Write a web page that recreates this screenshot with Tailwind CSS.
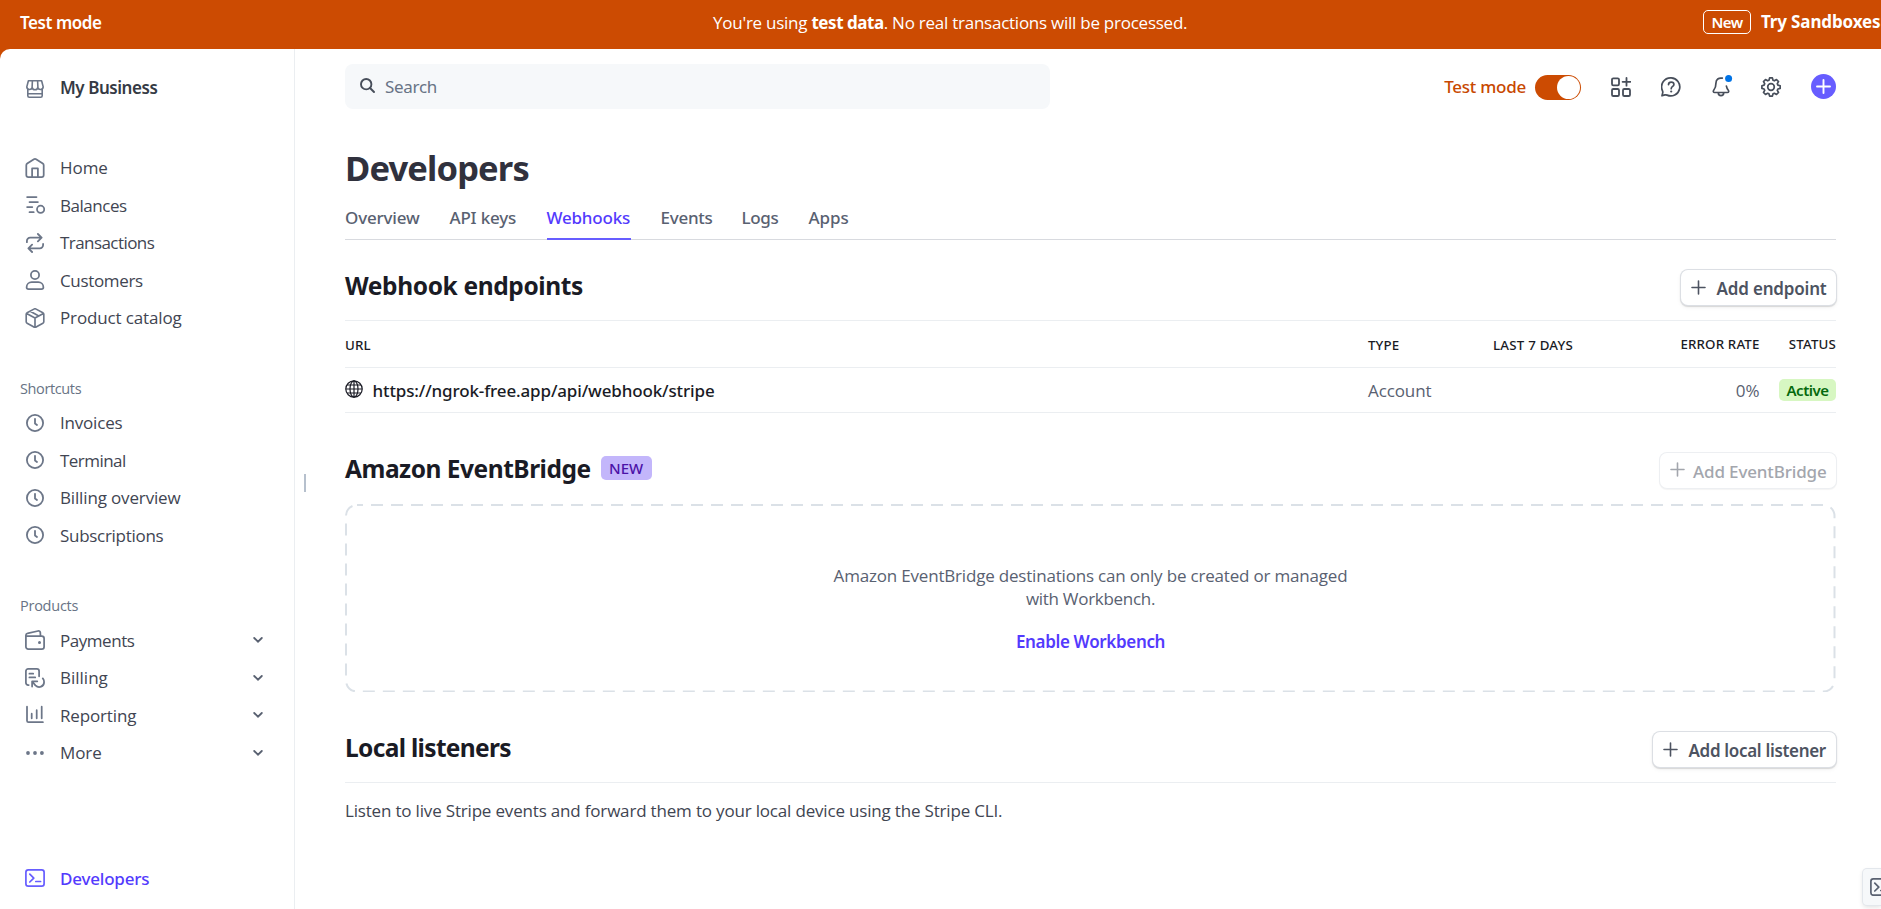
<!DOCTYPE html>
<html lang="en">
<head>
<meta charset="utf-8">
<title>Developers – Webhooks</title>
<script src="https://cdn.jsdelivr.net/npm/@tailwindcss/browser@4"></script>
</head>
<body class="h-[909px] w-[1881px] overflow-hidden bg-[#cc4b02] font-['Open_Sans','Noto_Sans',sans-serif] text-[17px] leading-[22px] text-[#414552] whitespace-nowrap">

<!-- Test mode banner -->
<div class="flex h-[49px] items-start text-white">
  <div class="w-[713px] shrink-0 pt-[12px] pl-5 font-['Noto_Sans'] font-semibold tracking-[-0.45px]">Test mode</div>
  <div class="w-[990px] shrink-0 pt-[12px] tracking-[-0.25px]">You're using <b class="font-['Noto_Sans'] font-bold tracking-[-0.45px]">test data</b>. No real transactions will be processed.</div>
  <div class="mt-[10px] flex h-6 w-12 shrink-0 items-center justify-center rounded-[5px] border border-white font-['Noto_Sans'] text-[15px] font-semibold tracking-[-0.6px]">New</div>
  <div class="ml-[10px] shrink-0 pt-[11px] font-['Noto_Sans'] font-bold tracking-[-0.14px]">Try Sandboxes</div>
</div>

<div class="flex h-[860px] rounded-tl-[10px] bg-white">

  <!-- Sidebar -->
  <nav class="flex w-[295px] shrink-0 flex-col border-r border-[#ebeef1]">
    <div class="mt-[20px] flex h-[38px] items-center pl-[25px] font-['Noto_Sans'] font-semibold tracking-[-0.45px] text-[#353a44]">
      <svg class="mt-0.5 mr-[15px] size-5 text-[#6c7688]" viewBox="0 0 20 20" fill="none" stroke="currentColor" stroke-width="1.6" stroke-linejoin="round"><path d="M3.4 1.7h13.2l1.6 6.2a2.75 2.75 0 0 1-5.4.6 2.85 2.85 0 0 1-5.6 0 2.75 2.75 0 0 1-5.4-.6zM7.4 1.7l-.3 6.6M12.6 1.7l.3 6.6M2.8 10.5v6.2c0 .9.6 1.5 1.5 1.5h11.4c.9 0 1.5-.6 1.5-1.5v-6.2M2.8 14.7h14.4"/></svg>
      My Business
    </div>

    <div class="mt-[42px]">
      <div class="flex h-[37.5px] items-center pl-[25px]">
        <svg class="mr-[15px] size-5 text-[#6c7688]" viewBox="0 0 20 20" fill="none" stroke="currentColor" stroke-width="1.75" stroke-linejoin="round"><path d="M1.3 7.2c0-.7.3-1.2.9-1.6L8.9 1.2c.7-.4 1.5-.4 2.2 0l6.7 4.4c.6.4.9.9.9 1.6V17c0 1.2-.9 2.1-2.1 2.1H3.4c-1.2 0-2.1-.9-2.1-2.1zM7.1 19v-8.6h5.8V19"/></svg>
        <span class="pt-[0.6px] tracking-[-0.05px]">Home</span>
      </div>
      <div class="flex h-[37.5px] items-center pl-[25px]">
        <svg class="mr-[15px] size-5 text-[#6c7688]" viewBox="0 0 20 20" fill="none" stroke="currentColor" stroke-width="1.75" stroke-linecap="round"><path d="M2.1 2.1h9.4M4.5 7.1h8.4M2.1 12.1h5.2M4.5 17.2h4.2"/><circle cx="15.6" cy="14.3" r="3.6"/></svg>
        <span class="pt-[0.6px] tracking-[-0.47px]">Balances</span>
      </div>
      <div class="flex h-[37.5px] items-center pl-[25px]">
        <svg class="mr-[15px] size-5 text-[#6c7688]" viewBox="0 0 20 20" fill="none" stroke="currentColor" stroke-width="1.8" stroke-linecap="round" stroke-linejoin="round"><path d="M1.9 9.2V8a3.3 3.3 0 0 1 3.3-3.3h11M12.9 1l3.7 3.7-3.7 3.7M18.1 10.9V12a3.3 3.3 0 0 1-3.3 3.3H4M7.1 11.6l-3.7 3.7L7.1 19"/></svg>
        <span class="pt-[0.6px] tracking-[-0.56px]">Transactions</span>
      </div>
      <div class="flex h-[37.5px] items-center pl-[25px]">
        <svg class="mr-[15px] size-5 text-[#6c7688]" viewBox="0 0 20 20" fill="none" stroke="currentColor" stroke-width="1.75" stroke-linejoin="round"><circle cx="10" cy="5" r="4.1"/><path d="M1.6 17.2a5.1 5.1 0 0 1 5.1-5h6.6a5.1 5.1 0 0 1 5.1 5c0 1.2-.7 1.9-1.9 1.9h-13c-1.2 0-1.9-.7-1.9-1.9z"/></svg>
        <span class="pt-[0.6px] tracking-[-0.34px]">Customers</span>
      </div>
      <div class="flex h-[37.5px] items-center pl-[25px]">
        <svg class="mr-[15px] size-5 text-[#6c7688]" viewBox="0 0 20 20" fill="none" stroke="currentColor" stroke-width="1.65" stroke-linejoin="round"><path d="M1.2 6.3c0-.7.3-1.2.9-1.5L8.9 1.1c.7-.4 1.5-.4 2.2 0l6.8 3.7c.6.3.9.8.9 1.5v7.5c0 .7-.3 1.2-.9 1.5l-6.8 3.7c-.7.4-1.5.4-2.2 0l-6.800-3.700c-.6-.3-.9-.8-.9-1.500zM1.600 5.500l8.400 4.500 8.400-4.500M10 10v9.100M5.200 3.300l8.600 4.700"/></svg>
        <span class="pt-[0.6px] tracking-[-0.14px]">Product catalog</span>
      </div>
    </div>

    <div class="mt-[40px] flex h-[24px] items-center pl-5 text-[14.5px] tracking-[-0.38px] text-[#687385]">Shortcuts</div>
    <div class="mt-[3.5px]">
      <div class="flex h-[37.5px] items-center pl-[25px]">
        <svg class="mr-[15px] size-5 text-[#6c7688]" viewBox="0 0 20 20" fill="none" stroke="currentColor" stroke-width="1.8" stroke-linecap="round" stroke-linejoin="round"><circle cx="10" cy="10" r="8.1"/><path d="M10 5.8v4.700l2 1.500"/></svg>
        <span class="pt-[0.6px] tracking-[-0.2px]">Invoices</span>
      </div>
      <div class="flex h-[37.5px] items-center pl-[25px]">
        <svg class="mr-[15px] size-5 text-[#6c7688]" viewBox="0 0 20 20" fill="none" stroke="currentColor" stroke-width="1.8" stroke-linecap="round" stroke-linejoin="round"><circle cx="10" cy="10" r="8.1"/><path d="M10 5.8v4.700l2 1.500"/></svg>
        <span class="pt-[0.6px] tracking-[-0.54px]">Terminal</span>
      </div>
      <div class="flex h-[37.5px] items-center pl-[25px]">
        <svg class="mr-[15px] size-5 text-[#6c7688]" viewBox="0 0 20 20" fill="none" stroke="currentColor" stroke-width="1.8" stroke-linecap="round" stroke-linejoin="round"><circle cx="10" cy="10" r="8.1"/><path d="M10 5.8v4.700l2 1.500"/></svg>
        <span class="pt-[0.6px] tracking-[-0.15px]">Billing overview</span>
      </div>
      <div class="flex h-[37.5px] items-center pl-[25px]">
        <svg class="mr-[15px] size-5 text-[#6c7688]" viewBox="0 0 20 20" fill="none" stroke="currentColor" stroke-width="1.8" stroke-linecap="round" stroke-linejoin="round"><circle cx="10" cy="10" r="8.1"/><path d="M10 5.8v4.700l2 1.500"/></svg>
        <span class="pt-[0.6px] tracking-[-0.29px]">Subscriptions</span>
      </div>
    </div>

    <div class="mt-[40px] flex h-[24px] items-center pl-5 text-[14.5px] tracking-[-0.25px] text-[#687385]">Products</div>
    <div class="mt-[3.5px]">
      <div class="flex h-[37.5px] items-center pl-[25px]">
        <svg class="mr-[15px] size-5 text-[#6c7688]" viewBox="0 0 20 20" fill="none" stroke="currentColor" stroke-width="1.75" stroke-linejoin="round"><path d="M.9 6.100h15.800c1.400 0 2.400 1 2.400 2.400v8.200c0 1.400-1 2.400-2.400 2.400H3.300c-1.400 0-2.400-1-2.400-2.400V5.300c0-1 .6-1.700 1.600-1.900L13 1c1.300-.3 2.100.3 2.300 1.500l.2 3.400"/><circle cx="14.500" cy="12.500" r="1.500" fill="currentColor" stroke="none"/></svg>
        <span class="pt-[0.6px] tracking-[-0.46px]">Payments</span>
        <svg class="mr-[31px] ml-auto h-[6px] w-[10px] text-[#596171]" viewBox="0 0 10 6" fill="none" stroke="currentColor" stroke-width="1.800" stroke-linecap="round"><path d="M1.200 1 5 4.700 8.800 1"/></svg>
      </div>
      <div class="flex h-[37.5px] items-center pl-[25px]">
        <svg class="mr-[15px] size-5 text-[#6c7688]" viewBox="0 0 20 20" fill="none" stroke="currentColor" stroke-width="1.75" stroke-linecap="round" stroke-linejoin="round"><path d="M3.700 17H3.200C1.900 17 .9 16 .9 14.700V3.200C.9 1.900 1.900.9 3.200.9h8.600c1.300 0 2.300 1 2.300 2.300v5.100M4.400 5.700h3.800M4.400 9.400h5.800M7.100 18.500v-5.200h5.200M7.400 13.700l3 3.700c3.500 3.200 8.700 1.200 8.700-3.500 0-1.700-.6-2.700-1.300-3.500"/></svg>
        <span class="pt-[0.6px]">Billing</span>
        <svg class="mr-[31px] ml-auto h-[6px] w-[10px] text-[#596171]" viewBox="0 0 10 6" fill="none" stroke="currentColor" stroke-width="1.800" stroke-linecap="round"><path d="M1.200 1 5 4.700 8.800 1"/></svg>
      </div>
      <div class="flex h-[37.5px] items-center pl-[25px]">
        <svg class="mr-[15px] size-5 text-[#6c7688]" viewBox="0 0 20 20" fill="none" stroke="currentColor" stroke-width="1.75" stroke-linecap="round" stroke-linejoin="round"><path d="M2 1.700v14c0 .9.600 1.500 1.500 1.500h14.400M6.700 8.700v4.600M11.700 5.200v8.100M16.700 1.700v11.600"/></svg>
        <span class="pt-[0.6px] tracking-[-0.15px]">Reporting</span>
        <svg class="mr-[31px] ml-auto h-[6px] w-[10px] text-[#596171]" viewBox="0 0 10 6" fill="none" stroke="currentColor" stroke-width="1.800" stroke-linecap="round"><path d="M1.200 1 5 4.700 8.800 1"/></svg>
      </div>
      <div class="flex h-[37.5px] items-center pl-[25px]">
        <svg class="mr-[15px] size-5 text-[#6c7688]" viewBox="0 0 20 20" fill="currentColor"><circle cx="3" cy="10" r="1.900"/><circle cx="10" cy="10" r="1.900"/><circle cx="16.900" cy="10" r="1.900"/></svg>
        <span class="pt-[0.6px] tracking-[-0.1px]">More</span>
        <svg class="mr-[31px] ml-auto h-[6px] w-[10px] text-[#596171]" viewBox="0 0 10 6" fill="none" stroke="currentColor" stroke-width="1.800" stroke-linecap="round"><path d="M1.200 1 5 4.700 8.800 1"/></svg>
      </div>
    </div>

    <div class="mt-[88px] flex h-[37.5px] items-center pl-[25px] font-['Noto_Sans'] font-medium tracking-[-0.2px] text-[#533afd]">
      <svg class="mr-[15px] size-5 text-[#675dff]" viewBox="0 0 20 20" fill="none" stroke="currentColor" stroke-width="1.700" stroke-linecap="round" stroke-linejoin="round"><rect x=".9" y="1.900" width="18.200" height="16.300" rx="2.400"/><path d="M4.800 6.200l4 3.900-4 3.900M10.800 13.500h4.800"/></svg>
      <span class="pt-[1px]">Developers</span>
    </div>
  </nav>

  <!-- Resize handle -->
  <div class="mt-[425px] ml-[9px] h-[18px] w-[2px] shrink-0 bg-[#b6c0cd]"></div>

  <!-- Main column -->
  <main class="ml-[39px] flex w-[1491px] shrink-0 flex-col">
    <div class="mt-[15px] flex h-[45px] items-center">
      <div class="flex h-[45px] w-[705px] items-center rounded-[8px] bg-[#f6f8fa] pl-[15px] tracking-[-0.3px] text-[#687385]">
        <svg class="-mt-0.5 mr-[10px] size-[15px] text-[#474e5a]" viewBox="0 0 15 15" fill="none" stroke="currentColor" stroke-width="1.900" stroke-linecap="round"><circle cx="6.200" cy="6.200" r="5.200"/><path d="M10 10l4 4"/></svg>
        <span class="pt-px font-['Noto_Sans']">Search</span>
      </div>
      <div class="ml-auto flex items-center">
        <span class="pt-px font-['Noto_Sans'] font-medium tracking-[-0.25px] text-[#c84801]">Test mode</span>
        <div class="mt-[2px] ml-[9px] flex h-[25px] w-[46px] items-center justify-end rounded-full bg-[#cc4b02] pr-[1.500px]"><div class="size-[22.500px] rounded-full bg-white"></div></div>
        <div class="ml-[30px] flex items-center gap-[30px] text-[#474e5a]">
          <svg class="size-5" viewBox="0 0 20 20" fill="none" stroke="currentColor" stroke-width="1.800" stroke-linecap="round"><rect x="1" y="1.300" width="7" height="7" rx="1.300"/><rect x="1" y="12" width="7" height="7" rx="1.300"/><rect x="12" y="12" width="7" height="7" rx="1.300"/><path d="M15.500.9v7.800M11.600 4.800h7.800"/></svg>
          <svg class="size-5" viewBox="0 0 20 20" fill="none" stroke="currentColor" stroke-width="1.700" stroke-linecap="round" stroke-linejoin="round"><path d="M10.200.9a9 9 0 1 1-4.100 17.200c-.9-.4-1.300-.4-2.200-.2l-2.900.9.700-2.900c.2-.8.200-1.200-.2-2.100A9 9 0 0 1 10.200.9z"/><path d="M7.500 7.600c.1-1.600 1.200-2.500 2.700-2.500s2.700.9 2.700 2.300c0 2.100-2.700 2-2.700 4.300"/><circle cx="10.200" cy="14.500" r="1.100" fill="currentColor" stroke="none"/></svg>
          <svg class="size-5 overflow-visible" viewBox="0 0 20 20" fill="none" stroke="currentColor" stroke-width="1.700" stroke-linecap="round" stroke-linejoin="round"><path d="M11.300 1.200C7.600.5 5 2.500 5 5.800c0 4.500-1 6-2.300 7.500-.8 1-.4 2.200.9 2.200h12.800c1.300 0 1.700-1.200.9-2.200-.9-1-1.500-2.100-1.900-4.100M7.300 15.700c0 1.700 1.100 2.900 2.700 2.900s2.700-1.200 2.700-2.900"/><circle cx="17.600" cy="1.500" r="3.500" fill="#0073e6" stroke="none"/></svg>
          <svg class="size-5" viewBox="0 0 20 20" fill="none" stroke="currentColor" stroke-width="1.700" stroke-linejoin="round"><circle cx="10" cy="10" r="3.300"/><path d="M8.600.9h2.800l.6 2.300 1.400.6 2.100-1.200 2 2-1.200 2 .6 1.500 2.300.6v2.700l-2.300.6-.6 1.400 1.200 2.100-2 2-2.100-1.200-1.400.6-.6 2.200H8.600L8 16.900l-1.400-.6-2.100 1.200-2-2 1.200-2.100-.6-1.400-2.200-.6V8.700l2.200-.6.6-1.500-1.200-2 2-2 2.100 1.200L8 3.200z"/></svg>
          <svg class="size-[25px]" viewBox="0 0 25 25"><circle cx="12.500" cy="12.500" r="12.500" fill="#675dff"/><path d="M12.500 6v13M6 12.500h13" stroke="#fff" stroke-width="1.900" stroke-linecap="round"/></svg>
        </div>
      </div>
    </div>

    <h1 class="mt-[37px] h-[44px] font-['Noto_Sans'] text-[34.500px] leading-[44px] font-bold tracking-[-0.86px] text-[#30313d]">Developers</h1>

    <div class="mt-[12px] flex h-[38px] gap-[30px] border-b border-[#d8dadf] font-['Noto_Sans'] font-medium text-[#596171]">
      <span class="h-[38px] w-[74.500px] pt-[5px] tracking-[-0.17px]">Overview</span>
      <span class="h-[38px] w-[67px] pt-[5px] tracking-[-0.19px]">API keys</span>
      <span class="h-[38px] w-[84px] border-b-2 border-[#675dff] pt-[5px] tracking-[-0.2px] text-[#533afd]">Webhooks</span>
      <span class="h-[38px] w-[51px] pt-[5px] tracking-[-0.27px]">Events</span>
      <span class="h-[38px] w-[37px] pt-[5px] tracking-[-0.33px]">Logs</span>
      <span class="h-[38px] pt-[5px] tracking-[-0.07px]">Apps</span>
    </div>

    <!-- Webhook endpoints -->
    <section class="mt-[29px]">
      <div class="flex h-[51px] justify-between">
        <h2 class="h-8 font-['Noto_Sans'] text-[24.500px] leading-[34px] font-bold tracking-[-0.38px] text-[#1a1b25]">Webhook endpoints</h2>
        <button class="mt-px flex h-[35px] w-[155px] items-center rounded-[7px] bg-white pl-[10px] font-['Noto_Sans'] font-semibold tracking-[-0.18px] text-[#4d5361] shadow-[0_0_0_1px_#dcdfe4,0_1px_1px_1px_#00000020,0_2px_5px_#00000012]">
          <svg class="mr-[10.500px] size-[15px]" viewBox="0 0 15 15" stroke="currentColor" stroke-width="1.600" stroke-linecap="round"><path d="M7.500 1v13M1 7.500h13"/></svg><span class="pt-[2px]">Add endpoint</span>
        </button>
      </div>
      <div class="grid h-[47px] grid-cols-[1023px_125px_1fr_76.500px] items-center border-t border-[#ebeef1] font-['Noto_Sans'] text-[13.300px] font-medium tracking-[0.15px] text-[#1a1b25]">
        <span class="pt-px">URL</span><span class="pt-px">TYPE</span>
        <div class="flex justify-between"><span class="pt-px tracking-[0.22px]">LAST 7 DAYS</span><span>ERROR RATE</span></div>
        <span class="text-right">STATUS</span>
      </div>
      <div class="grid h-[46px] grid-cols-[1023px_125px_1fr_76.500px] items-center border-y border-[#ebeef1]">
        <div class="flex items-center font-['Noto_Sans'] font-medium tracking-[-0.14px] text-[#1a1b25]">
          <svg class="-mt-0.5 mr-[9.500px] size-[18px]" viewBox="0 0 18 18" fill="none" stroke="currentColor" stroke-width="1.200"><circle cx="9" cy="9" r="8.200"/><ellipse cx="9" cy="9" rx="4" ry="8.200"/><path d="M9 .8v16.400M.8 9h16.400M2 5h14M2 13h14"/></svg><span class="pt-px">https://ngrok-free.app/api/webhook/stripe</span>
        </div>
        <span class="pt-px tracking-[-0.1px] text-[#596171]">Account</span>
        <span class="pt-px text-right text-[#596171]">0%</span>
        <span class="flex h-[22px] w-[57px] items-center justify-center justify-self-end rounded-[5px] bg-[#d7f7c2] font-['Noto_Sans'] text-[15px] font-semibold tracking-[-0.5px] text-[#05690d]">Active</span>
      </div>
    </section>

    <!-- Amazon EventBridge -->
    <section class="mt-[39px]">
      <div class="flex h-[52px] items-start">
        <h2 class="font-['Noto_Sans'] text-[24.500px] leading-[34px] font-bold tracking-[-0.48px] text-[#1a1b25]">Amazon EventBridge</h2>
        <span class="mt-[4px] ml-[10px] flex h-[24px] w-[51px] items-center justify-center rounded-[5px] bg-[#c3b6fb] font-['Noto_Sans'] text-[15px] font-medium text-[#4b12a8]">NEW</span>
        <button class="mt-px ml-auto flex h-[35px] w-[176px] items-center rounded-[7px] bg-white pl-[10px] font-['Noto_Sans'] font-medium tracking-[-0.14px] text-[#a3a6ad] shadow-[0_0_0_1px_#edeff2,0_1px_1px_1px_#0000000c]">
          <svg class="-mt-[2px] mr-[8px] size-[15px]" viewBox="0 0 15 15" stroke="currentColor" stroke-width="1.600" stroke-linecap="round"><path d="M7.500 1v13M1 7.500h13"/></svg><span class="pt-[2px]">Add EventBridge</span>
        </button>
      </div>
      <div class="relative flex h-[188px] flex-col items-center pt-[60px] leading-[23px] text-[#596171]">
        <svg class="absolute inset-0 h-[188px] w-[1491px]" viewBox="0 0 1491 188" fill="none"><rect x="1" y="0" width="1488.500" height="186.500" rx="11" stroke="#dbe1e7" stroke-width="2" stroke-dasharray="12 8" stroke-dashoffset="-14" class="translate-y-px"/></svg>
        <p class="tracking-[-0.19px]">Amazon EventBridge destinations can only be created or managed</p>
        <p class="tracking-[-0.29px]">with Workbench.</p>
        <a class="mt-5 font-['Noto_Sans'] font-semibold tracking-[-0.34px] text-[#533afd]">Enable Workbench</a>
      </div>
    </section>

    <!-- Local listeners -->
    <section class="mt-[39px]">
      <div class="flex h-[52px] justify-between border-b border-[#ebeef1]">
        <h2 class="font-['Noto_Sans'] text-[24.500px] leading-[34px] font-bold tracking-[-0.67px] text-[#1a1b25]">Local listeners</h2>
        <button class="mt-px flex h-[35px] w-[183px] items-center rounded-[7px] bg-white pl-[10px] font-['Noto_Sans'] font-semibold tracking-[-0.32px] text-[#4d5361] shadow-[0_0_0_1px_#dcdfe4,0_1px_1px_1px_#00000020,0_2px_5px_#00000012]">
          <svg class="mr-[10.500px] size-[15px]" viewBox="0 0 15 15" stroke="currentColor" stroke-width="1.600" stroke-linecap="round"><path d="M7.500 1v13M1 7.500h13"/></svg><span class="pt-[2px]">Add local listener</span>
        </button>
      </div>
      <p class="mt-[17px] tracking-[-0.18px]">Listen to live Stripe events and forward them to your local device using the Stripe CLI.</p>
    </section>
  </main>
</div>

<!-- Workbench drawer tab at the window's edge -->
<div class="absolute top-[869px] left-[1863px] flex h-[36px] w-[18px] items-center overflow-hidden rounded-l-[4px] bg-[#f6f8fa] pl-[7px] shadow-[0_0_0_1px_#e3e7ec,0_2px_5px_#00000022]">
  <svg class="-mt-px h-[18px] w-5 shrink-0 text-[#596171]" viewBox="0 1 20 18" fill="none" stroke="currentColor" stroke-width="1.700" stroke-linecap="round" stroke-linejoin="round"><rect x=".9" y="1.900" width="18.200" height="16.300" rx="2.400"/><path d="M4.800 6.200l4 3.900-4 3.900M10.800 13.500h4.800"/></svg>
</div>
</body>
</html>
